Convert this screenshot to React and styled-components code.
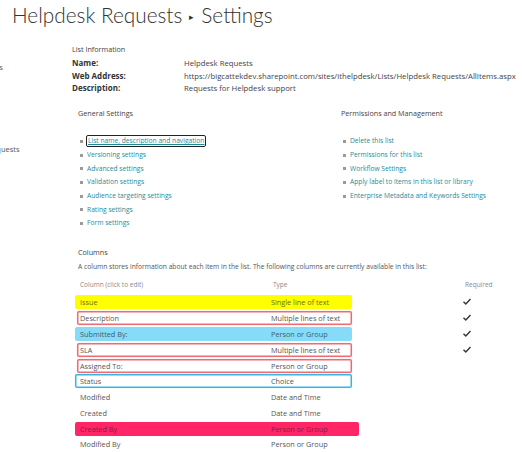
import React from 'react'
import styled, { createGlobalStyle, css } from 'styled-components'

const GlobalStyle = createGlobalStyle`
  html, body {
    margin: 0;
    padding: 0;
    background: #ffffff;
  }
  body {
    font-family: "Open Sans", "Noto Sans", "DejaVu Sans", sans-serif;
    color: #444;
    overflow: hidden;
  }
`

const Page = styled.div`
  width: 522px;
  height: 452px;
  display: grid;
  grid-template-columns: 78px 1fr;
  grid-template-rows: 40px 1fr;
  overflow: hidden;
`

const Title = styled.h1`
  grid-column: 1 / -1;
  margin: 0;
  padding-left: 12px;
  font-family: Lato, "Open Sans", sans-serif;
  font-size: 20.8px;
  font-weight: 300;
  line-height: 30px;
  color: #333;
  white-space: nowrap;
`

const Crumb = styled.span`
  display: inline-block;
  margin: 0 7px;
  font-size: 9px;
  vertical-align: 3px;
`

const Sidebar = styled.nav`
  overflow: hidden;
`

const SideList = styled.ul`
  list-style: none;
  margin: 21px 0 0 -47px;
  padding: 0;
  font-size: 7.5px;
  color: #555;
  white-space: nowrap;
`

const SideItem = styled.li`
  height: ${(p) => p.$h}px;
  line-height: 12px;
`

const Main = styled.main`
  font-size: 7.5px;
  line-height: 12px;
  white-space: nowrap;
`

const Heading = styled.div`
  margin-top: ${(p) => p.$top || 0}px;
  font-size: 7.2px;
  line-height: 12px;
  color: #444;
`

const InfoBlock = styled.section`
  margin-left: -6px;
`

const InfoGrid = styled.div`
  margin-top: 2px;
  display: grid;
  grid-template-columns: 112px 1fr;
  grid-auto-rows: 12.5px;
  align-items: center;
`

const Label = styled.div`
  font-size: 8px;
  font-weight: 700;
  color: #333;
`

const Value = styled.div`
  font-size: 7.75px;
  color: #444;
`

const Settings = styled.div`
  margin-top: 12px;
  display: grid;
  grid-template-columns: 263px 1fr;
`

const LinkList = styled.ul`
  list-style: none;
  margin: 16px 0 0;
  padding: 0;
`

const LinkItem = styled.li`
  height: 13.7px;
  display: flex;
  align-items: center;
  padding-left: 2px;
`

const Bullet = styled.span`
  width: 3px;
  height: 3px;
  background: #9a9a9a;
  margin-right: 4px;
  flex: none;
`

const SettingLink = styled.a`
  color: #1f8b98;
  font-size: 6.7px;
  text-decoration: none;
  line-height: 10px;
  ${(p) =>
    p.$focused &&
    css`
      margin-left: -1px;
      padding: 0 1px;
      border: 1px solid #222;
      border-radius: 2px;
      text-decoration: underline;
    `}
`

const Note = styled.div`
  margin-top: 3px;
  font-size: 6.7px;
  color: #555;
`

const HeadRow = styled.div`
  margin-top: 6px;
  display: grid;
  grid-template-columns: 193px 192px 1fr;
  padding-left: 2px;
  font-size: 6.5px;
  color: #8a8a8a;
`

const Rows = styled.div`
  margin-top: 4px;
  margin-left: -3px;
  display: flex;
  flex-direction: column;
  gap: 1.8px;
`

const Row = styled.div`
  display: grid;
  grid-template-columns: 388px 1fr;
  height: 14px;
  align-items: center;
`

const highlight = {
  yellow: css`
    background: #ffff00;
    color: #6d6d1a;
  `,
  blue: css`
    background: #86dcf8;
    color: #3e5d69;
  `,
  pink: css`
    background: #ff2567;
    color: #8e1c3f;
  `,
  red: css`
    margin-left: 2px;
    padding-left: 3px;
    box-shadow: inset 0 0 0 1.5px #ec6c74, 0 0 1px #f3a0a5;
  `,
  cyan: css`
    box-shadow: inset 0 0 0 1.5px #3ab4e3, 0 0 1px #8fd3ef;
  `,
}

const Cell = styled.div`
  box-sizing: border-box;
  width: ${(p) => (p.$wide ? 284 : p.$mark === 'red' ? 275 : 277)}px;
  height: 14px;
  display: grid;
  grid-template-columns: 191px 1fr;
  align-items: center;
  padding-left: 5px;
  border-radius: 2px;
  color: #555;
  font-size: 7.3px;
  ${(p) => p.$mark && highlight[p.$mark]}
`

const Check = styled.svg`
  width: 8px;
  height: 7px;
  margin-left: -0.5px;
`

const CheckMark = () => (
  <Check viewBox="0 0 16 14">
    <path d="M1 7.5 L5.6 12 L15 2" fill="none" stroke="#333" strokeWidth="2.8" strokeLinejoin="miter" />
  </Check>
)

const general = [
  'List name, description and navigation',
  'Versioning settings',
  'Advanced settings',
  'Validation settings',
  'Audience targeting settings',
  'Rating settings',
  'Form settings',
]

const permissions = [
  'Delete this list',
  'Permissions for this list',
  'Workflow Settings',
  'Apply label to items in this list or library',
  'Enterprise Metadata and Keywords Settings',
]

const columns = [
  { name: 'Issue', type: 'Single line of text', req: true, mark: 'yellow' },
  { name: 'Description', type: 'Multiple lines of text', req: true, mark: 'red' },
  { name: 'Submitted By:', type: 'Person or Group', req: true, mark: 'blue' },
  { name: 'SLA', type: 'Multiple lines of text', req: true, mark: 'red' },
  { name: 'Assigned To:', type: 'Person or Group', mark: 'red' },
  { name: 'Status', type: 'Choice', mark: 'cyan' },
  { name: 'Modified', type: 'Date and Time' },
  { name: 'Created', type: 'Date and Time' },
  { name: 'Created By', type: 'Person or Group', mark: 'pink', wide: true },
  { name: 'Modified By', type: 'Person or Group' },
]

function LinkColumn({ title, items, focusFirst }) {
  return (
    <div>
      <Heading>{title}</Heading>
      <LinkList>
        {items.map((t, i) => (
          <LinkItem key={t}>
            <Bullet />
            <SettingLink href="#" $focused={focusFirst && i === 0}>
              {t}
            </SettingLink>
          </LinkItem>
        ))}
      </LinkList>
    </div>
  )
}

export default function App() {
  return (
    <>
      <GlobalStyle />
      <Page>
        <Title>
          Helpdesk Requests<Crumb>▸</Crumb>Settings
        </Title>
        <Sidebar>
          <SideList>
            <SideItem $h={82}>Conversations</SideItem>
            <SideItem $h={56}>Helpdesk Requests</SideItem>
            <SideItem $h={20}>Site contents</SideItem>
          </SideList>
        </Sidebar>
        <Main>
          <InfoBlock>
            <Heading $top={3}>List Information</Heading>
            <InfoGrid>
              <Label>Name:</Label>
              <Value>Helpdesk Requests</Value>
              <Label>Web Address:</Label>
              <Value>https://bigcattekdev.sharepoint.com/sites/ithelpdesk/Lists/Helpdesk Requests/AllItems.aspx</Value>
              <Label>Description:</Label>
              <Value>Requests for Helpdesk support</Value>
            </InfoGrid>
          </InfoBlock>
          <Settings>
            <LinkColumn title="General Settings" items={general} focusFirst />
            <LinkColumn title="Permissions and Management" items={permissions} />
          </Settings>
          <Heading $top={16}>Columns</Heading>
          <Note>
            A column stores information about each item in the list. The following columns are currently available in this list:
          </Note>
          <HeadRow>
            <span>Column (click to edit)</span>
            <span>Type</span>
            <span>Required</span>
          </HeadRow>
          <Rows>
            {columns.map((c) => (
              <Row key={c.name}>
                <Cell $mark={c.mark} $wide={c.wide}>
                  <span>{c.name}</span>
                  <span>{c.type}</span>
                </Cell>
                <div>{c.req && <CheckMark />}</div>
              </Row>
            ))}
          </Rows>
        </Main>
      </Page>
    </>
  )
}
